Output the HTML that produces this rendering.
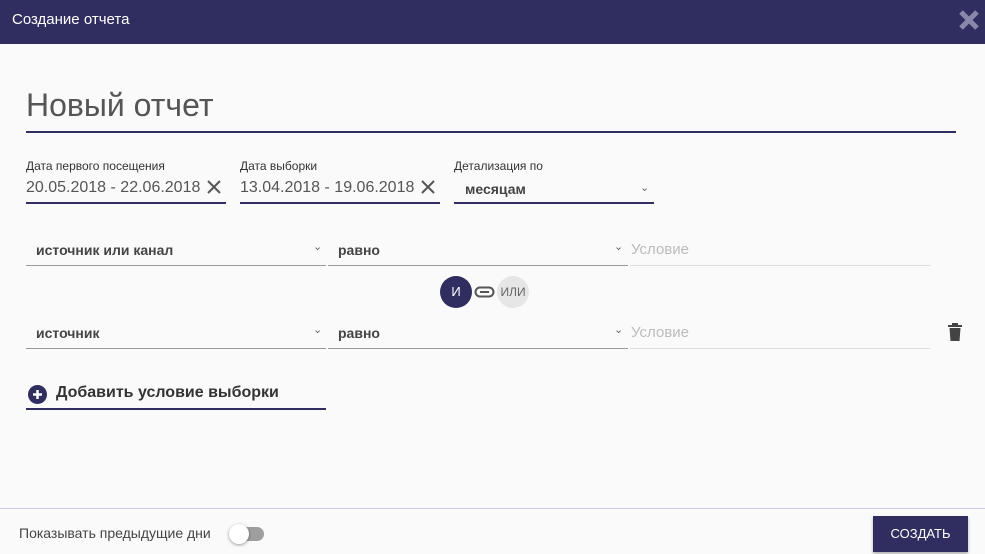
<!DOCTYPE html>
<html><head><meta charset="utf-8"><style>
*{margin:0;padding:0;box-sizing:border-box}
body{width:985px;height:554px;background:#fafafa;font-family:"Liberation Sans",sans-serif;position:relative;overflow:hidden;color:#555}
.a{position:absolute;white-space:nowrap}
.hdr{left:0;top:0;width:985px;height:44px;background:#302e60}
.lbl{font-size:12px;color:#333}
.val{font-size:16px;color:#555}
.b{font-weight:bold;font-size:14px;color:#444}
.ul{height:2px;background:#302e60}
.gl{height:1px;background:#999}
.chev{font-size:11px;color:#666}
</style></head><body>
<div class="a hdr"></div>
<div class="a" style="left:12px;top:11px;font-size:15px;color:#fff">Создание отчета</div>
<svg class="a" style="left:958px;top:9px" width="22" height="22" viewBox="0 0 22 22"><path d="M3 3L19 19M19 3L3 19" stroke="#8a88aa" stroke-width="5"/></svg>

<div class="a" style="left:26px;top:87px;font-size:32px;color:#555">Новый отчет</div>
<div class="a ul" style="left:26px;top:131px;width:930px"></div>

<div class="a lbl" style="left:26px;top:159px">Дата первого посещения</div>
<div class="a val" style="left:26px;top:179px">20.05.2018 - 22.06.2018</div>
<svg class="a" style="left:207px;top:180px" width="14" height="14"><path d="M1 1L13 13M13 1L1 13" stroke="#555" stroke-width="2"/></svg>
<div class="a ul" style="left:26px;top:202px;width:200px"></div>

<div class="a lbl" style="left:240px;top:159px">Дата выборки</div>
<div class="a val" style="left:240px;top:179px">13.04.2018 - 19.06.2018</div>
<svg class="a" style="left:421px;top:180px" width="14" height="14"><path d="M1 1L13 13M13 1L1 13" stroke="#555" stroke-width="2"/></svg>
<div class="a ul" style="left:240px;top:202px;width:200px"></div>

<div class="a lbl" style="left:454px;top:159px">Детализация по</div>
<div class="a b" style="left:465px;top:181px">месяцам</div>
<div class="a chev" style="left:640px;top:181px">⌄</div>
<div class="a ul" style="left:454px;top:202px;width:200px"></div>

<div class="a b" style="left:36px;top:242px">источник или канал</div>
<div class="a chev" style="left:313px;top:240px">⌄</div>
<div class="a gl" style="left:26px;top:265px;width:300px"></div>
<div class="a b" style="left:338px;top:242px">равно</div>
<div class="a chev" style="left:614px;top:240px">⌄</div>
<div class="a gl" style="left:328px;top:265px;width:300px"></div>
<div class="a" style="left:631px;top:241px;font-size:15px;color:#bbb">Условие</div>
<div class="a" style="left:630px;top:265px;width:300px;height:1px;background:#ddd"></div>

<div class="a" style="left:440px;top:276px;width:32px;height:32px;border-radius:50%;background:#302e60;color:#fff;font-size:13px;text-align:center;line-height:32px">И</div>
<svg class="a" style="left:474px;top:286px" width="21" height="12"><rect x="1.5" y="1.5" width="18" height="9" rx="4.5" fill="none" stroke="#555" stroke-width="2"/><path d="M6 6H15" stroke="#555" stroke-width="2"/></svg>
<div class="a" style="left:497px;top:276px;width:32px;height:32px;border-radius:50%;background:#e6e6e6;color:#666;font-size:12px;text-align:center;line-height:32px">ИЛИ</div>

<div class="a b" style="left:36px;top:325px">источник</div>
<div class="a chev" style="left:313px;top:323px">⌄</div>
<div class="a gl" style="left:26px;top:348px;width:300px"></div>
<div class="a b" style="left:338px;top:325px">равно</div>
<div class="a chev" style="left:614px;top:323px">⌄</div>
<div class="a gl" style="left:328px;top:348px;width:300px"></div>
<div class="a" style="left:631px;top:324px;font-size:15px;color:#bbb">Условие</div>
<div class="a" style="left:630px;top:348px;width:300px;height:1px;background:#ddd"></div>
<svg class="a" style="left:947px;top:322px" width="16" height="20"><rect x="1" y="3" width="14" height="2" fill="#444"/><rect x="5" y="1" width="6" height="2" fill="#444"/><path d="M2.5 6H13.5L12.5 19H3.5Z" fill="#444"/></svg>

<div class="a" style="left:28px;top:385px;width:19px;height:19px;border-radius:50%;background:#302e60"></div>
<svg class="a" style="left:28px;top:385px" width="19" height="19"><path d="M9.5 5V14M5 9.5H14" stroke="#fff" stroke-width="2.5"/></svg>
<div class="a" style="left:56px;top:384px;font-size:16px;font-weight:bold;color:#333">Добавить условие выборки</div>
<div class="a" style="left:26px;top:408px;width:300px;height:2px;background:#302e60"></div>

<div class="a" style="left:0;top:508px;width:985px;height:1px;background:#cfcbe8"></div>
<div class="a" style="left:19px;top:525px;font-size:14px;color:#444">Показывать предыдущие дни</div>
<div class="a" style="left:232px;top:527px;width:32px;height:14px;border-radius:7px;background:#9e9e9e"></div>
<div class="a" style="left:229px;top:524px;width:20px;height:20px;border-radius:50%;background:#fff;box-shadow:0 1px 3px rgba(0,0,0,.4)"></div>
<div class="a" style="left:873px;top:516px;width:95px;height:36px;background:#302e60;color:#fff;font-size:13px;text-align:center;line-height:36px;box-shadow:0 2px 3px rgba(0,0,0,.3)">СОЗДАТЬ</div>
</body></html>
